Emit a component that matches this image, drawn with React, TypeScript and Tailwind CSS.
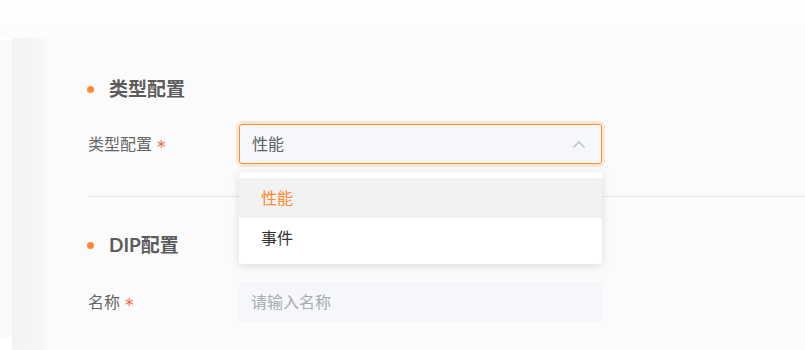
import React from "react";

const font = { fontFamily: '"Lato", "Noto Sans CJK SC", sans-serif' };

function Heading({ text }: { text: string }) {
  return (
    <div className="flex items-center h-[22px]">
      <span className="w-[7px] h-[7px] rounded-full bg-[#ff8a33] ml-[-1px]" />
      <span className="ml-[15px] text-[19px] font-bold text-[#5c5c5c] leading-[22px]">{text}</span>
    </div>
  );
}

function Star() {
  return (
    <span
      className="ml-[5px] inline-block text-[17px] leading-none text-[#f0613a] translate-y-[3px]"
      style={{ fontFamily: '"DejaVu Sans", sans-serif' }}
    >
      *
    </span>
  );
}

export default function App() {
  return (
    <div className="w-[805px] h-[350px] overflow-hidden bg-white flex flex-col" style={font}>
      <div className="h-[38px] bg-gradient-to-b from-white to-[#fcfcfc] shrink-0" />
      <div className="flex flex-1">
        <div className="w-[12px] mt-[2px] h-[298px] bg-[#fafafa] rounded-br-[6px] shrink-0" />
        <div className="w-[32px] bg-gradient-to-r from-[#f3f3f3] to-[#f7f7f7] shrink-0" />
        <div className="flex-1 bg-[#fbfbfb] pl-[44px] pt-[40px]">
          <Heading text="类型配置" />
          <div className="flex items-center mt-[24px] h-[40px]">
            <div className="w-[151px] text-[16px] text-[#666666] flex items-center">
              类型配置<Star />
            </div>
            <div className="relative w-[363px]">
              <div className="h-[40px] rounded-[3px] border border-[#ff8a33] bg-[#f5f7fa] ring-[3px] ring-[#ffe6d4] flex items-center justify-between pl-[12px] pr-[15px]">
                <span className="text-[16px] text-[#606266]">性能</span>
                <svg width="14" height="9" viewBox="0 0 14 9" fill="none">
                  <path d="M1.5 7.5 L7 2 L12.5 7.5" stroke="#c0c3c8" strokeWidth="1.6" />
                </svg>
              </div>
              <div className="absolute left-0 right-0 top-[48px] z-10 bg-white rounded-[4px] shadow-[0_2px_10px_rgba(0,0,0,0.13)] py-[6px]">
                <div className="h-[40px] flex items-center pl-[22px] bg-[#f2f2f2] text-[16px] text-[#ff8a33]">性能</div>
                <div className="h-[40px] flex items-center pl-[22px] text-[16px] text-[#333333]">事件</div>
              </div>
            </div>
          </div>
          <div className="h-px bg-[#e6e6e6] mt-[32px]" />
          <div className="mt-[37px]">
            <Heading text="DIP配置" />
          </div>
          <div className="flex items-center mt-[26px] h-[40px]">
            <div className="w-[151px] text-[16px] text-[#666666] flex items-center">
              名称<Star />
            </div>
            <div className="w-[363px] h-[40px] rounded-[3px] bg-[#f5f7fa] flex items-center pl-[12px]">
              <span className="text-[16px] text-[#a8abb2]">请输入名称</span>
            </div>
          </div>
        </div>
      </div>
    </div>
  );
}
